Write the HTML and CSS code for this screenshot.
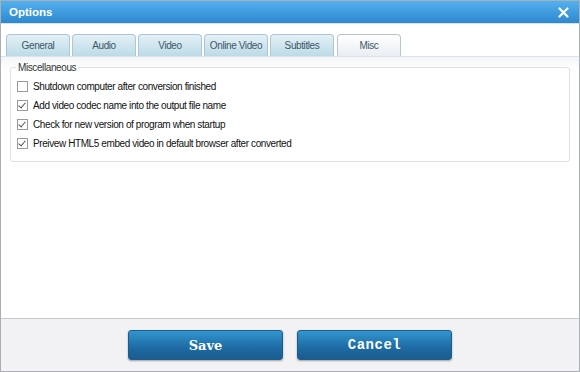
FILE: index.html
```html
<!DOCTYPE html>
<html>
<head>
<meta charset="utf-8">
<title>Options</title>
<link rel="stylesheet" href="styles.css">
</head>
<body>
<div class="window">
  <div class="titlebar">
    <span class="title">Options</span>
    <span class="close">
      <svg width="11" height="11" viewBox="0 0 11 11"><path d="M1.5 1.5 L9.5 9.5 M9.5 1.5 L1.5 9.5" stroke="#fff" stroke-width="2.2" stroke-linecap="round"/></svg>
    </span>
  </div>

  <div class="main">
    <div class="tabs">
      <div class="tab">General</div>
      <div class="tab">Audio</div>
      <div class="tab">Video</div>
      <div class="tab">Online Video</div>
      <div class="tab">Subtitles</div>
      <div class="tab active">Misc</div>
    </div>

    <div class="tab-body">
      <fieldset class="group">
        <legend>Miscellaneous</legend>
        <label class="opt"><span class="box"></span>Shutdown computer after conversion finished</label>
        <label class="opt"><span class="box checked"></span>Add video codec name into the output file name</label>
        <label class="opt"><span class="box checked"></span>Check for new version of program when startup</label>
        <label class="opt"><span class="box checked"></span>Preivew HTML5 embed video in default browser after converted</label>
      </fieldset>
    </div>
  </div>

  <div class="footer">
    <button class="btn btn-save">Save</button>
    <button class="btn btn-cancel">Cancel</button>
  </div>
</div>
</body>
</html>
```

FILE: styles.css
```css
html, body { margin: 0; padding: 0; }
body { font-family: Tahoma, "Liberation Sans", Arial, sans-serif; font-size: 10px; letter-spacing: -0.4px; color: #222; background: #fff; }

.window {
	width: 578px;
	height: 370px;
	border: 1px solid #a9b0b5;
	display: flex;
	flex-direction: column;
	background: #fff;
}

.titlebar {
	height: 22px;
	background: linear-gradient(#53b0ee, #2f88cf);
	display: flex;
	align-items: center;
	justify-content: space-between;
	padding: 0 10px 0 8px;
	border-bottom: 1px solid #d6e4ee;
}
.title { color: #fff; font-family: "Liberation Sans", sans-serif; font-weight: bold; font-size: 11.5px; letter-spacing: 0; }
.close { display: flex; }

.main { flex: 1; display: flex; flex-direction: column; }

.tabs {
	display: flex;
	gap: 2px;
	padding: 10px 0 0 5px;
	border-bottom: 1px solid #dde3e7;
}
.tab {
	width: 62px;
	height: 21px;
	line-height: 21px;
	text-align: center;
	white-space: nowrap;
	color: #3c5766;
	border: 1px solid #a9c7d4;
	border-bottom: none;
	border-radius: 4px 4px 0 0;
	background: linear-gradient(#e4f0f6, #bcdbe8);
}
.tab.active {
	margin-left: 1px;
	background: linear-gradient(#ffffff, #e9eef1);
	border-color: #b6c6cf;
}

.tab-body {
	flex: 1;
	background: linear-gradient(#f4f5f6 0, #ffffff 12px);
	padding: 5px 9px 0 9px;
	border-bottom: 1px solid #c5cacd;
}

.group {
	margin: 0;
	padding: 4px 0 6px 6px;
	border: 1px solid #dde1e4;
	border-radius: 3px;
	background: #fff;
	height: 88px;
}
.group legend { padding: 0 2px; margin-left: -1px; color: #333; }

.opt {
	display: flex;
	align-items: center;
	height: 19px;
	color: #111;
}
.box {
	width: 9px;
	height: 9px;
	border: 1px solid #9a9a9a;
	background: #fff;
	margin-right: 5px;
	position: relative;
}
.box.checked::after {
	content: "";
	position: absolute;
	left: 2px;
	top: 0px;
	width: 3px;
	height: 6px;
	border: solid #555;
	border-width: 0 1.5px 1.5px 0;
	transform: rotate(40deg);
}

.footer {
	height: 52px;
	background: #f2f2f4;
	display: flex;
	align-items: center;
	justify-content: center;
	gap: 14px;
}
.btn {
	width: 155px;
	height: 30px;
	border: 1px solid #1d5d8c;
	border-radius: 3px;
	background: linear-gradient(#3196d0, #1e6aa3 60%, #1a5c8f);
	box-shadow: 0 1px 2px rgba(0, 0, 0, 0.35);
	color: #fff;
	font-weight: bold;
	font-size: 14px;
	cursor: pointer;
}
.btn-save { font-family: "DejaVu Serif", "Liberation Serif", serif; font-size: 13px; letter-spacing: 0; }
.btn-cancel { font-family: "Liberation Mono", monospace; letter-spacing: 0.5px; }
```
